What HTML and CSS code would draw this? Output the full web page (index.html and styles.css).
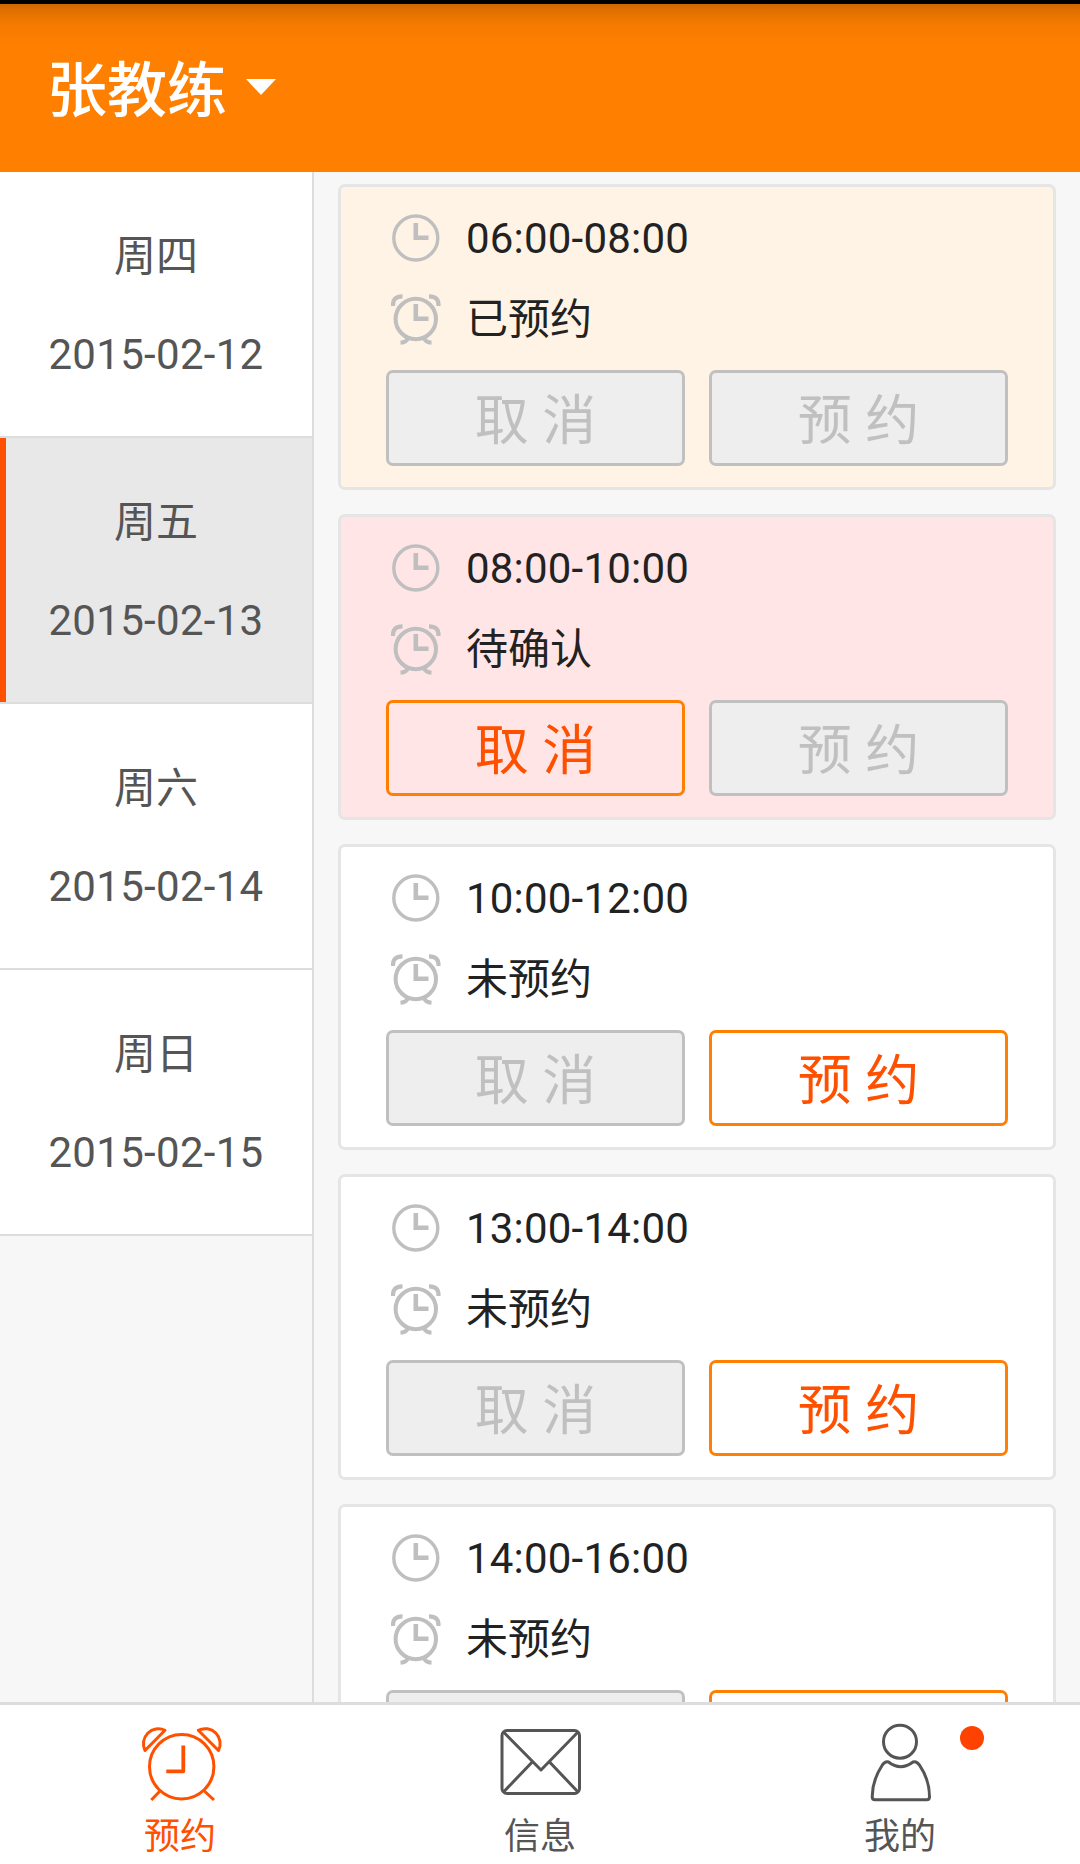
FILE: index.html
```
<!DOCTYPE html>
<html lang="zh-CN">
<head>
    <meta charset="UTF-8">
    <meta name="viewport" content="width=device-width, initial-scale=1.0">
    <title>预约</title>
    <link rel="stylesheet" href="styles.css">
</head>
<body>
    <!-- shared icons -->
    <svg class="sprite" width="0" height="0">
        <symbol id="clock" viewBox="0 0 50 50">
            <circle cx="24.800" cy="25" r="22" stroke-width="3.400"/>
            <path d="M24.800 10v14.700h12.700" stroke-width="4.600"/>
        </symbol>
        <symbol id="alarm" viewBox="0 0 50 52">
            <circle cx="24.800" cy="26" r="20.200" stroke-width="4"/>
            <path d="M24.800 11v14.700h12.700" stroke-width="4.600"/>
            <path d="M2 13c-.3-6.500 2.500-9.700 9.500-9.700M47.500 13c.3-6.500-2.500-9.700-9.500-9.700" stroke-width="4.200"/>
            <path d="M17 45c-1 3-3.500 4.500-7.500 4.800M33 45c1 3 3.500 4.500 7.500 4.800" stroke-width="4"/>
        </symbol>
    </svg>

    <header class="header">
        <h1>张教练</h1>
        <span class="caret"></span>
    </header>

    <main class="main">
        <nav class="days">
            <a class="day"><span>周四</span><span>2015-02-12</span></a>
            <a class="day active"><span>周五</span><span>2015-02-13</span></a>
            <a class="day"><span>周六</span><span>2015-02-14</span></a>
            <a class="day"><span>周日</span><span>2015-02-15</span></a>
        </nav>

        <section class="slots">
            <div class="card booked">
                <div class="row"><svg class="icon"><use href="#clock"/></svg><span class="time">06:00-08:00</span></div>
                <div class="row"><svg class="icon alarm"><use href="#alarm"/></svg><span class="status">已预约</span></div>
                <div class="buttons">
                    <button disabled>取 消</button>
                    <button disabled>预 约</button>
                </div>
            </div>
            <div class="card pending">
                <div class="row"><svg class="icon"><use href="#clock"/></svg><span class="time">08:00-10:00</span></div>
                <div class="row"><svg class="icon alarm"><use href="#alarm"/></svg><span class="status">待确认</span></div>
                <div class="buttons">
                    <button>取 消</button>
                    <button disabled>预 约</button>
                </div>
            </div>
            <div class="card">
                <div class="row"><svg class="icon"><use href="#clock"/></svg><span class="time">10:00-12:00</span></div>
                <div class="row"><svg class="icon alarm"><use href="#alarm"/></svg><span class="status">未预约</span></div>
                <div class="buttons">
                    <button disabled>取 消</button>
                    <button>预 约</button>
                </div>
            </div>
            <div class="card">
                <div class="row"><svg class="icon"><use href="#clock"/></svg><span class="time">13:00-14:00</span></div>
                <div class="row"><svg class="icon alarm"><use href="#alarm"/></svg><span class="status">未预约</span></div>
                <div class="buttons">
                    <button disabled>取 消</button>
                    <button>预 约</button>
                </div>
            </div>
            <!-- runs on under the tab bar -->
            <div class="card">
                <div class="row"><svg class="icon"><use href="#clock"/></svg><span class="time">14:00-16:00</span></div>
                <div class="row"><svg class="icon alarm"><use href="#alarm"/></svg><span class="status">未预约</span></div>
                <div class="buttons">
                    <button disabled></button>
                    <button></button>
                </div>
            </div>
        </section>
    </main>

    <footer class="tabs">
        <a class="tab active">
            <svg width="90" height="84" viewBox="0 0 90 84">
                <circle cx="46.700" cy="46.700" r="32.200"/>
                <path d="M48.300 25.500v25.800H31.300" stroke-width="3.800"/>
                <path d="M10 30.500A15 15 0 0 1 30 10.300zM83.500 30.500A15 15 0 0 0 63.300 10.300z"/>
                <path d="M25 71l-8.700 9M69.300 71l9.700 9"/>
            </svg>
            <span>预约</span>
        </a>
        <a class="tab">
            <svg width="90" height="84" viewBox="0 0 90 84">
                <rect x="7" y="10.500" width="77.500" height="63" rx="5"/>
                <path d="M8.500 12L46 50 83 12M8.500 72l29-30.300M83 72L54.300 41.700"/>
            </svg>
            <span>信息</span>
        </a>
        <a class="tab">
            <svg width="90" height="84" viewBox="0 0 90 84">
                <circle cx="45" cy="21.700" r="16.500"/>
                <path d="M33.500 42q12.200 9.500 24.500 0c3-1 4.500.3 6.500 3.200 6.500 9.500 10 20 10 31.500 0 2-.8 3-2.800 3H20c-2 0-2.800-1-2.800-3 0-11.500 3.800-22 10-31.500 2-2.900 3.500-4.200 6.300-3.200z"/>
            </svg>
            <span>我的</span>
            <i class="dot"></i>
        </a>
    </footer>
</body>
</html>
```
FILE: styles.css
```
* {
    box-sizing: border-box;
}

body {
    margin: 0;
    height: 1864px;
    display: flex;
    flex-direction: column;
    overflow: hidden;
    background-color: #f7f7f7;
    color: #222;
    font-family: Roboto, "Noto Sans CJK SC", sans-serif;
    font-size: 42px;
}

svg {
    flex: none;
    fill: none;
    stroke: currentColor;
}

.sprite {
    position: absolute;
}

.header {
    height: 172px;
    flex: none;
    display: flex;
    align-items: center;
    padding: 4px 0 0 47px;
    border-top: 4px solid #000;
    background: linear-gradient(#cc6600, #e06f00 6px, #f57a00 20px, #ff7f00 40px);
    color: #fff;
}

.header h1 {
    margin: 4px 0 0;
    font-size: 60px;
    font-weight: 500;
    line-height: 80px;
}

.caret {
    margin: -6px 0 0 19px;
    border: 15px solid transparent;
    border-top: 16px solid #fff;
    border-bottom: 0;
}

.main {
    flex: 1;
    min-height: 0;
    display: flex;
    overflow: hidden;
}

.days {
    width: 314px;
    border-right: 2px solid #ddd;
}

.day {
    height: 266px;
    display: flex;
    flex-direction: column;
    align-items: center;
    padding-top: 36px;
    border-bottom: 2px solid #ddd;
    background-color: #fff;
    color: #555;
    line-height: 98px;
}

.day.active {
    background-color: #e8e8e8;
    box-shadow: inset 6px 0 #ff5000;
}

.day span + span {
    letter-spacing: 0.3px;
}

.slots {
    flex: 1;
    padding: 12px 24px;
}

.card {
    height: 306px;
    margin-bottom: 24px;
    padding: 11px 45px 0;
    border: 3px solid #e5e5e5;
    border-radius: 7px;
    background-color: #fff;
}

.card.booked {
    background-color: #fff3e5;
}

.card.pending {
    background-color: #ffe5e6;
}

.row {
    height: 80px;
    display: flex;
    align-items: center;
    padding-left: 5px;
}

.row + .row {
    height: 82px;
}

.icon {
    width: 50px;
    height: 50px;
    margin-right: 25px;
    color: #bfbfbf;
}

.icon.alarm {
    height: 52px;
}

.time {
    letter-spacing: 0.2px;
}

.status {
    margin-bottom: 7px;
}

.buttons {
    display: flex;
    gap: 24px;
    margin-top: 10px;
}

button {
    flex: 1;
    height: 96px;
    padding: 7px 0 0;
    border: 3px solid #ff7f00;
    border-radius: 7px;
    background: none;
    color: #ff5000;
    font: inherit;
    font-size: 54px;
    line-height: 83px;
}

button:disabled {
    border-color: #c0c0c0;
    background-color: #eee;
    color: #c0c0c0;
}

.tabs {
    height: 162px;
    flex: none;
    display: flex;
    border-top: 3px solid #ddd;
    background-color: #fff;
}

.tab {
    position: relative;
    flex: 1;
    display: flex;
    flex-direction: column;
    align-items: center;
    padding-top: 15px;
    color: #555;
    font-size: 36px;
}

.tab svg {
    stroke-width: 3;
    stroke-linejoin: round;
}

.tab span {
    flex: none;
    line-height: 66px;
}

.tab.active {
    color: #ff5000;
}

.dot {
    position: absolute;
    top: 21px;
    right: 96px;
    width: 24px;
    height: 24px;
    border-radius: 50%;
    background-color: #ff4200;
}
```
